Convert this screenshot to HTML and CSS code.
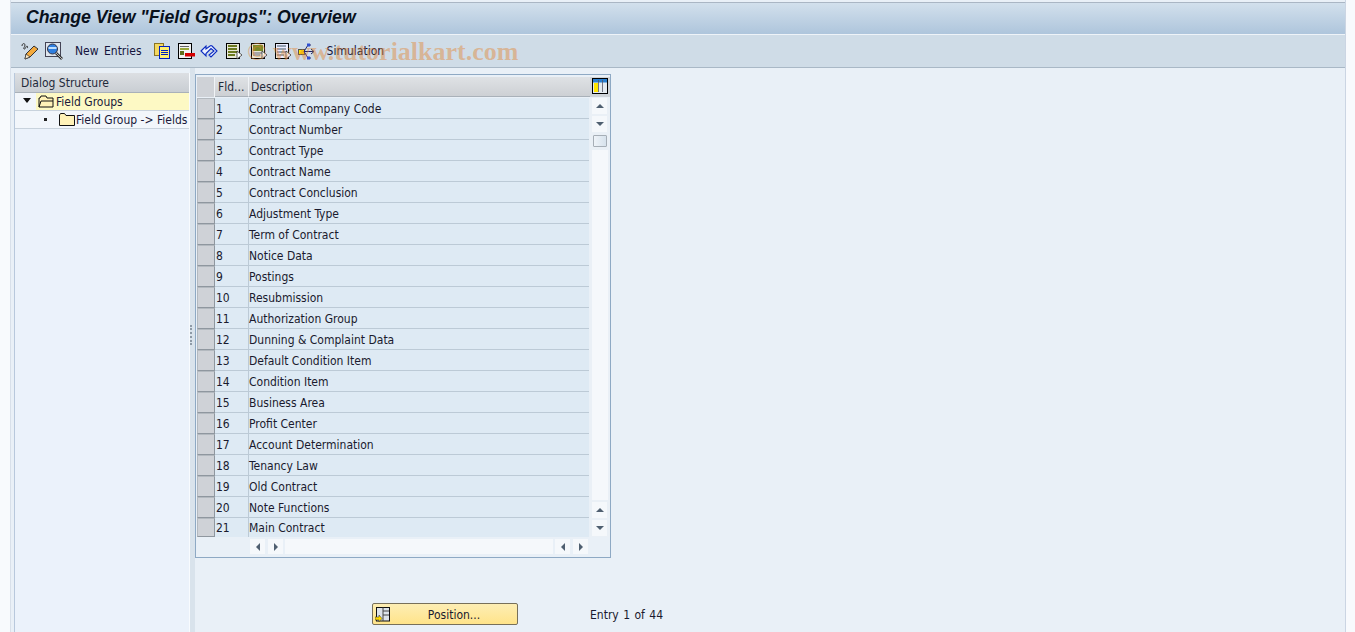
FILE: index.html
```html
<!DOCTYPE html>
<html lang="en">
<head>
<meta charset="utf-8">
<title>Change View "Field Groups": Overview</title>
<link rel="stylesheet" href="styles.css">
</head>
<body>
<div class="shell">
  <header class="titlebar"><h1>Change View "Field Groups": Overview</h1></header>
  <nav class="toolbar">
    <svg class="ic first" viewBox="0 0 18 18"><path d="M1 4c0-3 3-3 3-1s-2 3-1 4 2-3 3-3 0 2 1 2" fill="none" stroke="#333" stroke-width="1"/><path d="M4 17l1-5 8-8 4 3-8 8z" fill="#f3a93c" stroke="#333"/><path d="M4 17l1-5 4 3z" fill="#fbe9c8" stroke="#333" stroke-width=".7"/></svg>
    <svg class="ic mag" viewBox="0 0 18 18"><rect x=".5" y=".5" width="15" height="14" fill="#dfe6ee" stroke="#445"/><circle cx="7.500" cy="7" r="5" fill="#2f7fe0" stroke="#334"/><path d="M3.500 6h8" stroke="#bfe0ff" stroke-width="2"/><path d="M11 11l6 6" stroke="#333" stroke-width="2.600"/><path d="M11 11l6 6" stroke="#ddd" stroke-width=".8"/></svg>
    <span class="tool-label new">New Entries</span>
    <svg class="ic copy" viewBox="0 0 18 18"><rect x="1.500" y="1.500" width="9" height="12" fill="#f4d860" stroke="#8a7420"/><rect x="6.500" y="4.500" width="10" height="12" fill="#ffef70" stroke="#0020c0"/><path d="M8 8.500h7M8 10.500h7M8 12.500h7" stroke="#0020c0"/></svg>
    <svg class="ic del" viewBox="0 0 18 18"><rect x="1.500" y="1.500" width="13" height="15" fill="#f2f2f2" stroke="#000"/><path d="M3 4.500h9" stroke="#666"/><rect x="3" y="6" width="9" height="2" fill="#9aa83a"/><rect x="3" y="9" width="4" height="4" fill="#5f6e1a"/><rect x="8" y="11" width="10" height="3.500" fill="#d40000"/></svg>
    <svg class="ic undo" viewBox="0 0 18 18"><path d="M1 9L6 4V7L10 4Q11 3 12 4L17 9 11 15 9 13 14 9 11 6.500 6 11.500V14z" fill="#eef2ff" stroke="#0a2ac0" stroke-width="1.100"/></svg>
    <svg class="ic doc1" viewBox="0 0 18 18"><rect x="1.500" y="1.500" width="13" height="15" fill="#e8e8d8" stroke="#000"/><path d="M3 4h9M3 7h9M3 10h9M3 13h7" stroke="#6c7a20" stroke-width="2"/><path d="M12 9l5 4-5 4z" fill="#fff" stroke="#333" stroke-width=".8"/></svg>
    <svg class="ic doc2" viewBox="0 0 18 18"><rect x="1.500" y="1.500" width="13" height="15" fill="#e8e8d8" stroke="#000"/><rect x="3" y="3" width="10" height="6" fill="#7a8a28"/><path d="M3 11h9M3 13h7" stroke="#667"/><path d="M12 9l5 4-5 4z" fill="#fff" stroke="#333" stroke-width=".8"/></svg>
    <svg class="ic doc3" viewBox="0 0 18 18"><rect x="1.500" y="1.500" width="13" height="15" fill="#eef" stroke="#000"/><path d="M3 4h9M3 7h9M3 10h9M3 13h7" stroke="#778899" stroke-width="1.500"/><path d="M12 9l5 4-5 4z" fill="#fff" stroke="#333" stroke-width=".8"/></svg>
    <svg class="ic flow" viewBox="0 0 18 18"><rect x="1.500" y="7.500" width="6" height="5" fill="#ffe000" stroke="#554"/><path d="M7 9.500h10M14 7l3 2.500-3 2.500M7 9.500L11 3h3M7 9.500L11 16h3" fill="none" stroke="#23236b"/><path d="M10 1.500h3v3h-3zM10 14.500h3v3h-3z" fill="#3050d0"/></svg>
    <span class="tool-label sim">Simulation</span>
    <span class="watermark">© www.tutorialkart.com</span>
  </nav>
  <main class="workspace">
    <aside class="tree">
      <div class="tree-head">Dialog Structure</div>
      <div class="tree-row selected">
        <span class="tree-arrow"></span>
        <svg class="folder" viewBox="0 0 16 13"><path d="M1 12V3h1l1-2h5l1 2h6v9z" fill="#fff2b8" stroke="#111"/><path d="M1 12l2-6h12" fill="none" stroke="#111"/></svg>
        <span>Field Groups</span>
      </div>
      <div class="tree-row child">
        <span class="tree-dot"></span>
        <svg class="folder" viewBox="0 0 16 13"><path d="M.5 12.500V2l1-1.500h4l1.500 2h8.500v10z" fill="#fff2b8" stroke="#111"/></svg>
        <span>Field Group -&gt; Fields</span>
      </div>
    </aside>
    <div class="splitter"><span class="grip"></span></div>
    <section class="content">
      <div class="table-box">
        <div class="table-head">
          <div class="corner"></div>
          <div class="th fld">Fld...</div>
          <div class="th desc">Description</div>
          <div class="settings">
            <svg viewBox="0 0 16 16"><rect x=".5" y=".5" width="15" height="15" fill="#e4eaef" stroke="#000"/><rect x="1" y="1" width="14" height="3.500" fill="#2a7fd0"/><rect x="2" y="5" width="4" height="9" fill="#ffe600"/><path d="M6.500 2v12M10.500 2v12" stroke="#556" stroke-width=".8"/></svg>
          </div>
        </div>
        <div class="table-body">
          <div class="rows">
            <div class="row"><i></i><b>1</b><span>Contract Company Code</span></div>
            <div class="row"><i></i><b>2</b><span>Contract Number</span></div>
            <div class="row"><i></i><b>3</b><span>Contract Type</span></div>
            <div class="row"><i></i><b>4</b><span>Contract Name</span></div>
            <div class="row"><i></i><b>5</b><span>Contract Conclusion</span></div>
            <div class="row"><i></i><b>6</b><span>Adjustment Type</span></div>
            <div class="row"><i></i><b>7</b><span>Term of Contract</span></div>
            <div class="row"><i></i><b>8</b><span>Notice Data</span></div>
            <div class="row"><i></i><b>9</b><span>Postings</span></div>
            <div class="row"><i></i><b>10</b><span>Resubmission</span></div>
            <div class="row"><i></i><b>11</b><span>Authorization Group</span></div>
            <div class="row"><i></i><b>12</b><span>Dunning &amp; Complaint Data</span></div>
            <div class="row"><i></i><b>13</b><span>Default Condition Item</span></div>
            <div class="row"><i></i><b>14</b><span>Condition Item</span></div>
            <div class="row"><i></i><b>15</b><span>Business Area</span></div>
            <div class="row"><i></i><b>16</b><span>Profit Center</span></div>
            <div class="row"><i></i><b>17</b><span>Account Determination</span></div>
            <div class="row"><i></i><b>18</b><span>Tenancy Law</span></div>
            <div class="row"><i></i><b>19</b><span>Old Contract</span></div>
            <div class="row"><i></i><b>20</b><span>Note Functions</span></div>
            <div class="row last"><i></i><b>21</b><span>Main Contract</span></div>
          </div>
          <div class="vscroll">
            <div class="sbtn"><span class="tri up"></span></div>
            <div class="sbtn"><span class="tri down"></span></div>
            <div class="thumb"></div>
            <div class="track"></div>
            <div class="sbtn"><span class="tri up"></span></div>
            <div class="sbtn"><span class="tri down"></span></div>
          </div>
        </div>
        <div class="hscroll">
          <div class="sbtn h"><span class="tri left"></span></div>
          <div class="sbtn h"><span class="tri right"></span></div>
          <div class="htrack"></div>
          <div class="sbtn h"><span class="tri left"></span></div>
          <div class="sbtn h"><span class="tri right"></span></div>
        </div>
      </div>
      <div class="footer">
        <button class="position" type="button">
          <svg viewBox="0 0 15 15"><rect x="1.500" y=".5" width="13" height="13.500" fill="#dde3ea" stroke="#111"/><path d="M8 .5v13.500M8 4h6M8 8h6" stroke="#444"/><path d="M0 10h4V8l3 3.500L4 15v-2H0z" fill="#ffd800" stroke="#443" stroke-width=".6"/></svg>
          <span>Position...</span>
        </button>
        <span class="entry">Entry 1 of 44</span>
      </div>
    </section>
  </main>
</div>
</body>
</html>
```
FILE: styles.css
```css
* { box-sizing: border-box; }
html, body { margin: 0; height: 100%; overflow: hidden; }
body {
  background: #f8fafd;
  font-family: "DejaVu Sans Condensed", "DejaVu Sans", sans-serif;
  font-stretch: condensed;
  font-size: 12px;
  color: #1a1a2e;
}
.shell {
  margin: 0 9px 0 10px;
  height: 632px;
  padding-top: 2px;
  display: flex;
  flex-direction: column;
  background: #e9f0f7;
  border-left: 1px solid #d8e0ea;
  border-right: 1px solid #cbd5e3;
}
.titlebar {
  height: 33px;
  flex: none;
  border-top: 1px solid #aab6c4;
  border-bottom: 1px solid #eef3f8;
  background: linear-gradient(#d2e0ec, #aec5dc);
  padding: 0 0 2px 15px;
  display: flex;
  align-items: center;
}
.titlebar h1 {
  margin: 0;
  font: italic bold 17.700px "Liberation Sans", Arial, sans-serif;
  color: #08101c;
}
.toolbar {
  position: relative;
  height: 33px;
  flex: none;
  background: #cfdce7;
  border-bottom: 1px solid #a9b8c6;
  display: flex;
  align-items: center;
}
.ic { width: 18px; height: 18px; flex: none; margin-left: 6px; }
.ic.first { margin-left: 10px; }
.ic.copy { margin-left: 11px; }
.ic.undo { margin-left: 5px; }
.ic.doc1, .ic.doc2 { margin-left: 7px; }
.ic.flow { margin-left: 5px; }
.tool-label { flex: none; color: #14143c; }
.new { margin-left: 12px; word-spacing: 2px; }
.sim { margin-left: 12px; }
.watermark {
  position: absolute;
  left: 236px;
  top: 2px;
  font: bold 26px "Liberation Serif", serif;
  color: rgba(226, 133, 50, 0.45);
  white-space: nowrap;
  pointer-events: none;
}
.workspace { flex: 1; display: flex; min-height: 0; }
.tree {
  width: 176px;
  margin-left: 3px;
  margin-top: 5px;
  flex: none;
  background: #ebf2fb;
  border-right: 1px solid #f8fbfe;
  border-left: 1px solid #b8c8dc;
}
.tree-head {
  height: 20px;
  background: linear-gradient(#dcdfe3, #c9ced3);
  border-bottom: 1px solid #a9b1b9;
  padding: 0 0 1px 6px;
  line-height: 20px;
  color: #1f2a3a;
}
.tree-row {
  height: 18px;
  display: flex;
  align-items: center;
  border-bottom: 1px solid #c8d2dc;
  white-space: nowrap;
  color: #1a1a3a;
  background: #f2f6fb;
}
.tree-row.selected { position: relative; }
.tree-row.selected::before {
  content: "";
  position: absolute;
  left: 21px; right: 0; top: 0; bottom: 0;
  background: #fdf9c4;
}
.tree-row > * { position: relative; }
.tree-arrow {
  width: 0; height: 0;
  margin: 0 7px 2px 8px;
  border: 4px solid transparent;
  border-top: 5px solid #111;
  border-bottom: 0;
}
.tree-dot {
  width: 3px; height: 3px;
  background: #222;
  margin: 0 12px 0 29px;
}
.folder { width: 16px; height: 13px; margin-right: 1px; flex: none; }
.selected .folder { margin-right: 2px; }
.splitter {
  width: 5px;
  flex: none;
  background: #d9e3ec;
  display: flex;
  align-items: center;
}
.grip { width: 2px; height: 20px; border-left: 2px dotted #8e9aa6; margin-bottom: 30px; }
.content { flex: 1; padding: 6px 0 0 0; display: flex; flex-direction: column; min-width: 0; }
.table-box {
  width: 416px;
  height: 484px;
  border: 1px solid #8ea9c4;
  padding: 2px 0 0 1px;
  background: #e9f0f7;
  flex: none;
}
.table-head { height: 20px; display: flex; }
.corner { width: 18px; background: #cfd2d7; border-right: 1px solid #f0f3f6; }
.th {
  background: linear-gradient(#dfe2e5, #cdd0d4);
  border-bottom: 1px solid #a9b1b9;
  line-height: 21px;
  color: #1f2a3a;
  padding-left: 3px;
}
.th.fld { width: 34px; border-right: 1px solid #f0f3f6; }
.th.desc { width: 341px; padding-left: 2px; }
.settings {
  width: 20px; height: 20px;
  background: #cfd4d9;
  padding: 1px 0 0 2px;
}
.settings svg { width: 16px; height: 16px; display: block; }
.table-body { height: 440px; display: flex; }
.rows { width: 392px; height: 440px; overflow: hidden; padding-top: 1px; flex: none; }
.row {
  height: 21px;
  display: flex;
  line-height: 22px;
  white-space: nowrap;
  background: #deeaf4;
}
.row i {
  width: 18px; height: 21px; flex: none;
  background: #cfd2d7;
  border: 1px solid #b3b9bf;
  border-right-color: #8f979f;
  border-bottom-color: #8f979f;
}
.row b {
  width: 34px; height: 21px;
  flex: none;
  font-weight: 400;
  padding-left: 1px;
  border-right: 1px solid #bccad6;
  border-bottom: 1px solid #bccad6;
}
.row span { flex: 1; height: 21px; border-bottom: 1px solid #bccad6; }
.row.last { height: 19px; }
.row.last i, .row.last b, .row.last span { height: 19px; }
.row.last b, .row.last span { border-bottom: 0; line-height: 20px; }
.vscroll {
  width: 20px;
  margin-left: 1px;
  padding: 1px 2px 1px 2px;
  display: flex;
  flex-direction: column;
  gap: 2px;
  height: 440px;
  background: #eaf0f6;
}
.sbtn {
  width: 15px; height: 16px;
  flex: none;
  background: #f5f8fb;
  display: flex;
  align-items: center;
  justify-content: center;
}
.thumb {
  width: 14px; height: 12px;
  flex: none;
  margin: 1px 0 1px 1px;
  border: 1px solid #a6aeb6;
  background: linear-gradient(90deg, #eef3f8, #d7e2ec);
  border-radius: 1px;
}
.track { flex: 1; background: #f5f8fb; }
.tri { width: 0; height: 0; border: 4px solid transparent; }
.tri.up { border-bottom: 4px solid #4f5f70; border-top: 0; }
.tri.down { border-top: 4px solid #4f5f70; border-bottom: 0; }
.tri.left { border-right: 4px solid #4f5f70; border-left: 0; }
.tri.right { border-left: 4px solid #4f5f70; border-right: 0; }
.hscroll {
  height: 15px;
  margin-top: 2px;
  padding-left: 53px;
  display: flex;
  gap: 3px;
}
.sbtn.h { height: 15px; width: 15px; }
.htrack { width: 268px; background: #f5f8fb; margin: 0 -1px; }
.footer {
  display: flex;
  align-items: center;
  margin-top: 45px;
  padding-left: 177px;
}
.position {
  width: 146px; height: 22px;
  padding: 1px 0 0 2px;
  display: flex;
  align-items: center;
  background: linear-gradient(#fdeeb4, #ffe48a);
  border: 1px solid #77705a;
  border-radius: 2px;
  font: inherit;
  color: #1a1a2e;
}
.position svg { width: 15px; height: 15px; flex: none; }
.position span { flex: 1; text-align: center; padding-right: 13px; padding-left: 14px; }
.entry { margin-left: 72px; padding-top: 2px; word-spacing: 1px; color: #1a1a2e; }
```
